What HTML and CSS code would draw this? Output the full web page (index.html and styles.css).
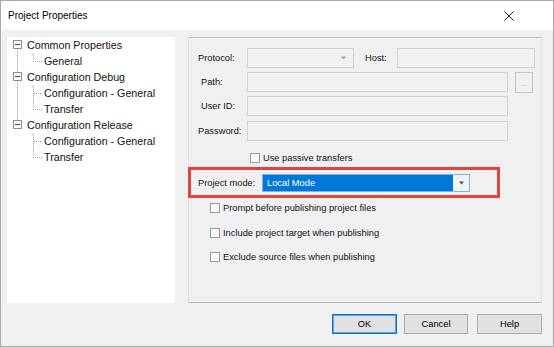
FILE: index.html
```html
<!DOCTYPE html>
<html>
<head>
<meta charset="utf-8">
<title>Project Properties</title>
<link rel="stylesheet" href="styles.css">
</head>
<body>
<div class="window">
  <div class="titlebar">
    <span class="title">Project Properties</span>
    <svg class="close" width="10" height="10" viewBox="0 0 10 10"><path d="M0.5 0.5L9.5 9.5M9.5 0.5L0.5 9.5" stroke="#222" stroke-width="1"/></svg>
  </div>
  <div class="content">
    <div class="main">
      <div class="tree">
        <div class="row">
          <svg class="g-parent" width="21" height="16"><path d="M11.5 12V16" class="dot"/><rect x="7.5" y="3.5" width="8" height="8" class="box"/><path d="M9 7.5H14" class="minus"/></svg>
          <span>Common Properties</span>
        </div>
        <div class="row">
          <svg class="g-child" width="38" height="16"><path d="M11.5 0V16" class="dot"/><path d="M27.5 0V8.5H36" class="dot"/></svg>
          <span>General</span>
        </div>
        <div class="row">
          <svg class="g-parent" width="21" height="16"><path d="M11.5 0V3M11.5 12V16" class="dot"/><rect x="7.5" y="3.5" width="8" height="8" class="box"/><path d="M9 7.5H14" class="minus"/></svg>
          <span>Configuration Debug</span>
        </div>
        <div class="row">
          <svg class="g-child" width="38" height="16"><path d="M11.5 0V16" class="dot"/><path d="M27.5 0V16M28 8.5H36" class="dot"/></svg>
          <span>Configuration - General</span>
        </div>
        <div class="row">
          <svg class="g-child" width="38" height="16"><path d="M11.5 0V16" class="dot"/><path d="M27.5 0V8.5H36" class="dot"/></svg>
          <span>Transfer</span>
        </div>
        <div class="row">
          <svg class="g-parent" width="21" height="16"><path d="M11.5 0V3" class="dot"/><rect x="7.5" y="3.5" width="8" height="8" class="box"/><path d="M9 7.5H14" class="minus"/></svg>
          <span>Configuration Release</span>
        </div>
        <div class="row">
          <svg class="g-child" width="38" height="16"><path d="M27.5 0V16M28 8.5H36" class="dot"/></svg>
          <span>Configuration - General</span>
        </div>
        <div class="row">
          <svg class="g-child" width="38" height="16"><path d="M27.5 0V8.5H36" class="dot"/></svg>
          <span>Transfer</span>
        </div>
      </div>

      <div class="panel">
        <div class="frow r1">
          <span class="lbl">Protocol:</span>
          <div class="combo dis">
            <svg width="7" height="4" viewBox="0 0 7 4"><path d="M1 0.5H6L3.5 3.5Z" fill="#a0a0a0"/></svg>
          </div>
          <span class="lbl host">Host:</span>
          <div class="input host-in"></div>
        </div>
        <div class="frow r2">
          <span class="lbl ind">Path:</span>
          <div class="input wide"></div>
          <div class="browse">...</div>
        </div>
        <div class="frow r3">
          <span class="lbl ind">User ID:</span>
          <div class="input wide"></div>
        </div>
        <div class="frow r4">
          <span class="lbl">Password:</span>
          <div class="input wide"></div>
        </div>
        <div class="crow passive">
          <span class="cb"></span><span>Use passive transfers</span>
        </div>
        <div class="mode">
          <span class="lbl mode-lbl">Project mode:</span>
          <div class="combo active">
            <span class="sel">Local Mode</span>
            <span class="arrow"><svg width="7" height="4" viewBox="0 0 7 4"><path d="M1 0.5H6L3.5 3.5Z" fill="#505050"/></svg></span>
          </div>
        </div>
        <div class="crow c1"><span class="cb"></span><span>Prompt before publishing project files</span></div>
        <div class="crow c2"><span class="cb"></span><span>Include project target when publishing</span></div>
        <div class="crow c3"><span class="cb"></span><span>Exclude source files when publishing</span></div>
      </div>
    </div>
    <div class="buttons">
      <button class="btn default">OK</button>
      <button class="btn cancel">Cancel</button>
      <button class="btn help">Help</button>
    </div>
  </div>
</div>
</body>
</html>
```

FILE: styles.css
```css
* { box-sizing: border-box; }
body { margin: 0; font-family: "Liberation Sans", Arial, sans-serif; color: #000; }

.window {
  width: 554px; height: 347px;
  border: 1px solid #a9a9a9;
  background: #f0f0f0;
  display: flex; flex-direction: column;
}
.titlebar {
  height: 29px; background: #fff;
  display: flex; align-items: center; justify-content: space-between;
  padding-left: 7px;
}
.title { font-size: 10px; color: #000; }
.close { margin-right: 39px; }

.content { flex: 1; padding: 7px 11px 0 5px; display: flex; flex-direction: column; }
.main { display: flex; gap: 13px; height: 266px; }

.tree {
  width: 169px; background: #fff;
  border-left: 1px solid #ececec;
  font-size: 10.7px;
}
.row { height: 16px; display: flex; align-items: center; white-space: nowrap; color: #111; }
.row svg { flex: none; margin-left: -1px; }
.row span { padding-left: 0; }
.dot { stroke: #a0a0a0; stroke-width: 1; stroke-dasharray: 1 1; fill: none; }
.box { fill: #f6f6f6; stroke: #8f8f8f; stroke-width: 1; }
.minus { stroke: #3b4a66; stroke-width: 1; }

.panel {
  width: 354px;
  border: 1px solid #e2e2e2;
  border-top-color: #b8b8b8;
  border-bottom-color: #b8b8b8;
  box-shadow: inset 0 1px 0 #fff;
  padding: 10px 0 0 9px;
  font-size: 9.3px;
}
.frow { display: flex; align-items: center; height: 20px; }
.r2, .r3 { margin-top: 4px; }
.r4 { margin-top: 5px; }
.lbl { width: 49px; flex: none; color: #111; }
.lbl.ind { padding-left: 3px; }
.lbl.host { width: 32px; margin-left: 11px; }

.input { height: 20px; border: 1px solid #d2d2d2; background: #f1f1f1; }
.input.wide { width: 261px; }
.input.host-in { width: 138px; }
.combo.dis {
  width: 107px; height: 20px; border: 1px solid #d2d2d2; background: #f1f1f1;
  display: flex; align-items: center; justify-content: flex-end; padding-right: 6px;
}
.browse {
  width: 18px; height: 21px; margin-left: 7px; align-self: flex-start;
  border: 1px solid #c4c4c4; background: #f1f1f1;
  font-size: 7px; color: #a8a8a8; display: flex; align-items: center; justify-content: center;
  padding-top: 2px;
}

.crow { display: flex; align-items: center; height: 15px; color: #111; }
.cb { width: 10px; height: 10px; border: 1px solid #9a9a9a; background: #fbfbfb; flex: none; margin-right: 3px; }
.passive { margin-top: 9px; padding-left: 52px; }
.c1 { margin-top: 2px; padding-left: 12px; }
.c2 { margin-top: 10px; padding-left: 12px; }
.c3 { margin-top: 9px; padding-left: 12px; }

.mode {
  margin-top: 2px; margin-left: -10px;
  width: 312px; height: 31px;
  border: 3px solid #e3433d;
  display: flex; align-items: center; padding-left: 7px;
}
.mode-lbl { width: 64px; }
.combo.active {
  width: 208px; height: 18px;
  border: 1px solid #7db3e8; background: #fff;
  display: flex;
}
.sel {
  width: 190px; height: 16px; background: #0078d7; color: #fff;
  display: flex; align-items: center; padding-left: 4px;
}
.arrow { flex: 1; display: flex; align-items: center; justify-content: center; background: #f3f3f3; }

.buttons { display: flex; justify-content: flex-end; margin-top: 11px; }
.btn {
  height: 20px; width: 65px; padding: 0;
  font-family: "Liberation Sans", Arial, sans-serif; font-size: 9.3px; color: #000;
  background: #e1e1e1; border: 1px solid #adadad;
}
.btn.default { border: 1px solid #0078d7; box-shadow: inset 0 0 0 1px #5aa0e2; }
.btn.cancel { width: 64px; margin-left: 7px; }
.btn.help { margin-left: 9px; }
```
